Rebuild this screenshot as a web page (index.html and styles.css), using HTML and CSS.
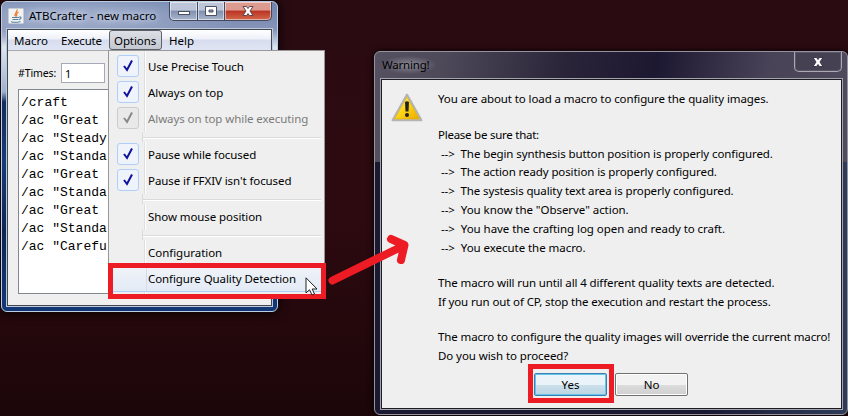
FILE: index.html
```
<!DOCTYPE html>
<html lang="en">
<head>
<meta charset="utf-8">
<title>ATBCrafter</title>
<link rel="stylesheet" href="styles.css">
</head>
<body>
<main class="desktop">
  <section class="window app">
    <header class="titlebar">
      <svg class="java" viewBox="0 0 16 16"><rect x=".5" y=".5" width="15" height="15" rx="1" fill="#f2f2f2" stroke="#c5cbd2"/><path d="M9 1.5C10 4 5.500 5 7.500 8.500M10.500 4C7 6 9.500 7 8.500 8.500" fill="none" stroke="#e87524" stroke-width="1.200"/><path d="M4 9.500h7M4.500 11.500h6M3 13.700q5 1.300 9.500-.3M11 9c3-.5 2.500 2 0 2.500" fill="none" stroke="#5382a1" stroke-width="1.100"/></svg>
      <h1 class="title t-app">ATBCrafter - new macro</h1>
      <div class="caption">
        <span class="cap min"><svg viewBox="0 0 14 12"><rect x="1.500" y="6.500" width="11" height="3" fill="#fff" stroke="#4c5060"/></svg></span>
        <span class="cap max"><svg viewBox="0 0 14 12"><path fill-rule="evenodd" d="M1.500 1.500h11v9h-11zM5 5v2h4V5z" fill="#fff" stroke="#4c5060"/></svg></span>
        <span class="cap close"><svg viewBox="0 0 14 12"><path d="M2 1.500h3.500L7 3.500l1.500-2H12L9 6l3 4.500H8.500L7 8.500l-1.500 2H2L5 6z" fill="#fff" stroke="#5b4650"/></svg></span>
      </div>
    </header>
    <div class="client">
      <nav class="menubar">
        <span class="mi m1">Macro</span><span class="mi m2">Execute</span><span class="mi m3 open">Options</span><span class="mi m4">Help</span>
      </nav>
      <div class="times"><label for="n">#Times:</label><input id="n" value="1"></div>
      <pre class="script">/craft
/ac "Great
/ac "Steady
/ac "Standa
/ac "Great
/ac "Standa
/ac "Great
/ac "Standa
/ac "Carefu</pre>
    </div>
  </section>

  <ul class="menu">
    <li class="item"><i class="check"><svg viewBox="0 0 20 20"><path d="M6 10L9 14L14 4.500"/></svg></i><span class="i1">Use Precise Touch</span></li>
    <li class="item"><i class="check"><svg viewBox="0 0 20 20"><path d="M6 10L9 14L14 4.500"/></svg></i><span class="i2">Always on top</span></li>
    <li class="item off"><i class="check"><svg viewBox="0 0 20 20"><path d="M6 10L9 14L14 4.500"/></svg></i><span class="i3">Always on top while executing</span></li>
    <li class="sep"></li>
    <li class="item"><i class="check"><svg viewBox="0 0 20 20"><path d="M6 10L9 14L14 4.500"/></svg></i><span class="i4">Pause while focused</span></li>
    <li class="item"><i class="check"><svg viewBox="0 0 20 20"><path d="M6 10L9 14L14 4.500"/></svg></i><span class="i5">Pause if FFXIV isn't focused</span></li>
    <li class="sep"></li>
    <li class="item"><span class="i6">Show mouse position</span></li>
    <li class="sep"></li>
    <li class="item"><span class="i7">Configuration</span></li>
    <li class="item hot"><span class="i8">Configure Quality Detection</span></li>
  </ul>

  <section class="window dialog">
    <header class="titlebar">
      <h2 class="title t-dlg">Warning!</h2>
      <div class="caption"><span class="cap dclose"><svg viewBox="0 0 14 12"><path d="M2 1.500h3.500L7 3.500l1.500-2H12L9 6l3 4.500H8.500L7 8.500l-1.500 2H2L5 6z" fill="#fff" stroke="#3a3848"/></svg></span></div>
    </header>
    <div class="client">
      <div class="body">
        <svg class="warn" viewBox="0 0 32 29"><defs><linearGradient id="y" x2="1" y2="1"><stop offset="0" stop-color="#fff27a"/><stop offset=".5" stop-color="#fbd415"/><stop offset="1" stop-color="#eba900"/></linearGradient></defs><path d="M16 1.500L30.500 27.300H1.500z" fill="#ddd" stroke="#b4b4b4" stroke-width="2" stroke-linejoin="round"/><path d="M16 4L28.500 26H3.500z" fill="url(#y)" stroke="#dba800" stroke-width=".6"/><path d="M14 9q2-1.500 4 0l-.5 9.500h-3z" fill="#222"/><circle cx="16" cy="22" r="2" fill="#222"/></svg>
        <div class="message">
          <p class="l1">You are about to load a macro to configure the quality images.</p>
          <p class="gap l2">Please be sure that:</p>
          <p class="in l3"><span class="to">--&gt; </span>The begin synthesis button position is properly configured.</p>
          <p class="in l4"><span class="to">--&gt; </span>The action ready position is properly configured.</p>
          <p class="in l5"><span class="to">--&gt; </span>The systesis quality text area is properly configured.</p>
          <p class="in l6"><span class="to">--&gt; </span>You know the "Observe" action.</p>
          <p class="in l7"><span class="to">--&gt; </span>You have the crafting log open and ready to craft.</p>
          <p class="in l8"><span class="to">--&gt; </span>You execute the macro.</p>
          <p class="gap l9">The macro will run until all 4 different quality texts are detected.</p>
          <p class="l10">If you run out of CP, stop the execution and restart the process.</p>
          <p class="gap l11">The macro to configure the quality images will override the current macro!</p>
          <p class="l12">Do you wish to proceed?</p>
        </div>
      </div>
      <div class="buttons"><button class="btn yes">Yes</button><button class="btn">No</button></div>
    </div>
  </section>

  <div class="mark mark-menu"></div>
  <div class="mark mark-yes"></div>
  <svg class="arrow" viewBox="328 230 85 60"><path d="M332.500 280.500L403 246M391 239L404.500 245L401 260"/></svg>
  <svg class="cursor" viewBox="0 0 13 19"><path d="M1 .8V16l3.500-3.300L7 18l2.500-1L7.200 12H12z" fill="#fff" stroke="#222"/></svg>
</main>
</body>
</html>
```
FILE: styles.css
```
* { box-sizing: border-box; }
body { margin: 0; }
.desktop { position: relative; width: 848px; height: 416px; overflow: hidden; background: linear-gradient(#2a0b12, #2d0a10 50%, #1c0609); font: 11.5px/18px "Noto Sans", "Open Sans", sans-serif; color: #000; }
h1, h2, p, ul, pre { margin: 0; padding: 0; font-weight: normal; }
.window { position: absolute; border-radius: 6px; display: flex; flex-direction: column; }
.app { left: 1px; top: 1px; width: 277px; height: 311px; padding: 0 5px 5px; border: 1px solid #b9cee5; background: radial-gradient(ellipse 170px 30px at 70px 14px, #a3b0cd, transparent), linear-gradient(#6f83ad 0, #8795b9 28px, #dce6ef 45px, #9cb0cd 90px, #112d60 100px, #183c77 160px, #0c2656 230px, #123774 300px); box-shadow: 0 0 12px #000; }
.titlebar { display: flex; align-items: center; flex: none; height: 27px; position: relative; }
.java { width: 16px; height: 16px; margin: 1px 5px 0 1px; }
.title { font-size: 11.5px; line-height: 18px; white-space: nowrap; }
.t-app { letter-spacing: 0; text-shadow: 0 0 8px #dce5f6, 0 0 5px #cdd8ee; }
.caption { margin-left: auto; align-self: flex-start; display: flex; }
.cap { display: flex; align-items: center; justify-content: center; height: 19px; border: 1px solid #42495e; border-top: 0; box-shadow: inset 0 0 0 1px #ffffff80; }
.cap svg { width: 14px; height: 12px; }
.min { width: 29px; border-radius: 0 0 0 5px; background: linear-gradient(#bdc6d9 45%, #7f8fae 50%, #a9b6ce); }
.max { width: 27px; border-left: 0; background: linear-gradient(#bdc6d9 45%, #7f8fae 50%, #a9b6ce); }
.close { width: 47px; border-left: 0; border-radius: 0 0 5px 0; background: linear-gradient(#dc9b8e 45%, #bb3323 50%, #d1694b); }
.client { flex: 1; min-height: 0; border: 1px solid #42474f; background: #efefef; box-shadow: 0 0 0 1px #bccade; }
.menubar { display: flex; height: 21px; background: linear-gradient(#fff, #eef1f9 45%, #d7ddee 50%, #dfe5f3); border-bottom: 1px solid #a9a9a9; line-height: 22px; }
.mi { flex: none; padding-left: 6px; white-space: nowrap; }
.m1 { width: 47px; }
.m2 { width: 54px; letter-spacing: -.15px; }
.m3 { width: 53px; padding-left: 4px; letter-spacing: -.1px; }
.m4 { padding-left: 7px; }
.open { border: 1px solid #5d6068; border-radius: 3px; background: linear-gradient(#dcdfe5, #c4c8d1); line-height: 20px; height: 20px; }
.times { display: flex; align-items: center; margin: 12px 0 0 10px; height: 20px; font-size: 10.5px; letter-spacing: -.1px; }
.times label { width: 43px; white-space: nowrap; }
.times input { width: 44px; height: 20px; border: 1px solid #a5a8b5; padding: 0 3px; font: 11px "Noto Sans", sans-serif; background: #fff; }
.script { margin: 6px 10px 0; height: 205px; padding: 4px 2px; border: 1px solid #828790; background: #fff; font: 13px/18px "Liberation Mono", monospace; }
.menu { position: absolute; left: 108px; top: 50px; width: 217px; height: 245px; list-style: none; padding: 3px 2px 2px; border: 1px solid #979797; background: linear-gradient(90deg, transparent 35px, #dedede 35px 36px, #fff 36px 37px, transparent 37px) #efefef; }
.item { height: 26px; padding-left: 37px; line-height: 25px; position: relative; white-space: nowrap; }
.check { position: absolute; left: 6px; top: 1px; width: 22px; height: 22px; border: 1px solid #aecff7; border-radius: 3px; background: #eef3fc; }
.check svg { display: block; width: 20px; height: 20px; }
.check path { fill: none; stroke: #10109a; stroke-width: 2; }
.off { color: #7b7b7b; }
.off .check { border-color: #ccc; background: #e9e9e9; }
.off .check path { stroke: #888; }
.i1, .i4 { letter-spacing: -.08px; }
.i3, .i5, .i6, .i8 { letter-spacing: -.08px; }
.i7 { letter-spacing: -.03px; }
.sep { height: 10px; margin: 0 1px 0 31px; background: linear-gradient(transparent 5px, #dadada 5px 6px, #fff 6px 7px, transparent 7px) #efefef; border-left: 1px solid #dadada; }
.hot { background: linear-gradient(90deg, transparent 35px, #d4dce8 35px 36px, transparent 36px), linear-gradient(#f0f3f8, #e3ebf6); border-bottom: 1px solid #aecff7; }
.dialog { left: 374px; top: 51px; width: 474px; height: 364px; padding: 0 5px 5px 6px; border: 1px solid #96949f; background: linear-gradient(100deg, #555161 0, #4d4959 70px, #292438 190px, #1d1831 280px, #484357 390px, #504c5d) top / 100% 110px no-repeat, linear-gradient(90deg, #1b1932 70%, #2e3c59); box-shadow: 0 0 6px #000; }
.t-dlg { margin: 0 0 1px; padding: 0 8px 0 1px; letter-spacing: -.2px; background: radial-gradient(ellipse closest-side, #8b8894, #8b889400); }
.dclose { width: 48px; height: 20px; border-color: #aaa8b2; border-radius: 0 0 5px 5px; background: #454153; box-shadow: inset 0 0 0 1px #595566; }
.dialog .client { box-shadow: 0 0 0 1px #a4a4ad; border-color: #1c1b24; }
.body { display: flex; padding: 10.4px 0 0 9px; height: 293px; }
.warn { flex: none; width: 32px; height: 29px; margin: 2.6px 15px 0 0; }
.message { flex: none; }
.message p { height: 18.8px; line-height: 18.8px; white-space: pre; }
.message .gap { margin-top: 16.7px; }
.message .in { padding-left: 3px; }
.to { margin-right: 3px; }
.l1, .l3, .l4 { letter-spacing: -.1px; }
.l2 { letter-spacing: -.25px; }
.l5 { letter-spacing: -.12px; }
.l6, .l7, .l8 { letter-spacing: -.05px; }
.l9, .l10, .l11 { letter-spacing: -.12px; }
.l12 { letter-spacing: -.08px; }
.buttons { display: flex; gap: 8px; padding-left: 152px; }
.btn { width: 73px; height: 23px; padding: 0; border: 1px solid #707070; border-radius: 2px; font: inherit; background: linear-gradient(#f2f2f2 50%, #dddddd 50%, #cfcfcf); box-shadow: inset 0 0 0 1px #fff; }
.yes { border-color: #3c7fb1; background: linear-gradient(#e9f3f8 50%, #cde1eb 50%, #bad5e2); box-shadow: inset 0 0 0 1px #62c5ee; }
.mark { position: absolute; border: 5px solid #ed1c24; }
.mark-menu { left: 108px; top: 263px; width: 218px; height: 36px; }
.mark-yes { left: 528px; top: 364px; width: 86px; height: 39px; }
.arrow { position: absolute; left: 328px; top: 230px; width: 85px; height: 60px; }
.arrow path { fill: none; stroke: #ed1c24; stroke-width: 8; stroke-linecap: round; stroke-linejoin: round; }
.cursor { position: absolute; left: 305px; top: 277px; width: 13px; height: 19px; }
```
